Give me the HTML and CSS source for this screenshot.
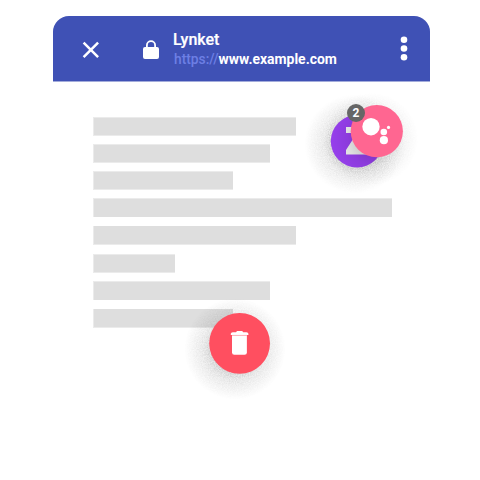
FILE: index.html
```html
<!DOCTYPE html>
<html lang="en">
<head>
<meta charset="utf-8">
<title>Lynket</title>
<link rel="stylesheet" href="styles.css">
</head>
<body>
<main class="browser">
  <header class="toolbar">
    <svg class="close" viewBox="0 0 18 18"><path d="M1.6 1.6 16.100 16.100M16.100 1.600 1.600 16.100"/></svg>
    <svg class="lock" viewBox="0 0 16 19"><path fill-rule="evenodd" d="M2 7H3V5.2a5 5 0 0 1 10 0V7h1a2 2 0 0 1 2 2v8a2 2 0 0 1-2 2H2a2 2 0 0 1-2-2V9a2 2 0 0 1 2-2ZM4.8 7h6.4V5.2a3.2 3.2 0 0 0-6.4 0Z"/></svg>
    <div class="heading">
      <div class="title">Lynket</div>
      <div class="url"><span class="scheme">https://</span>www.example.com</div>
    </div>
    <svg class="more" viewBox="0 0 8 25"><circle cx="4" cy="3.8" r="3.3"/><circle cx="4" cy="12.5" r="3.3"/><circle cx="4" cy="21.2" r="3.3"/></svg>
  </header>
  <section class="content">
    <div class="line top bottom w-long"></div>
    <div class="line top bottom w-medium"></div>
    <div class="line top bottom w-short"></div>
    <div class="line top w-full"></div>
    <div class="line bottom spaced w-long"></div>
    <div class="line top bottom spaced w-tiny"></div>
    <div class="line top w-medium"></div>
    <div class="line bottom spaced w-short"></div>
  </section>
</main>

<div class="bubbles">
  <svg viewBox="300 85 124 116">
    <defs>
      <radialGradient id="shade">
        <stop offset="0" stop-opacity=".42"/>
        <stop offset=".45" stop-opacity=".28"/>
        <stop offset=".62" stop-opacity=".15"/>
        <stop offset=".85" stop-opacity=".06"/>
        <stop offset="1" stop-opacity="0"/>
      </radialGradient>
      <filter id="grain" x="0" y="0" width="100%" height="100%" color-interpolation-filters="sRGB">
        <feTurbulence type="fractalNoise" baseFrequency=".85" numOctaves="2" result="noise"/>
        <feColorMatrix in="noise" values="0 0 0 0 0  0 0 0 0 0  0 0 0 0 0  1.9 0 0 0 -.45" result="speckle"/>
        <feComposite in="SourceGraphic" in2="speckle" operator="arithmetic" k1=".6" k2=".48"/>
      </filter>
      <clipPath id="purple"><circle cx="357" cy="141.200" r="26.200"/></clipPath>
    </defs>
    <ellipse cx="355" cy="144" rx="51" ry="50" fill="url(#shade)" filter="url(#grain)" opacity=".65"/>
    <ellipse cx="371" cy="139" rx="48" ry="47" fill="url(#shade)" filter="url(#grain)" opacity=".42"/>
    <circle cx="357" cy="141.200" r="26.200" fill="#963fec"/>
    <g clip-path="url(#purple)">
      <path d="M346 127h23v27.500h-23v-4.500l11-17h-11Z" fill="#eee"/>
      <circle cx="374" cy="139" r="43" fill="url(#shade)" opacity=".45"/>
    </g>
    <circle cx="376.800" cy="131.200" r="26.100" fill="#ff6691"/>
    <g fill="#fff"><circle cx="371" cy="126.700" r="8.700"/><circle cx="383.800" cy="132" r="3.300"/><circle cx="388.500" cy="127.400" r="1.600"/><circle cx="383.900" cy="140.200" r="4.100"/></g>
  </svg>
  <span class="badge">2</span>
</div>

<div class="remove">
  <svg viewBox="180 292 120 120">
    <circle cx="235" cy="349" r="51" fill="url(#shade)" filter="url(#grain)" opacity=".72"/>
    <circle cx="239.600" cy="343.300" r="30.400" fill="#ff4f60"/>
    <path d="M230.800 334.900v-1.200q0-1.500 2-1.500h3.200l1-1.200h5.200l1 1.200h3.200q2 0 2 1.500v1.200Z" fill="#fff"/>
    <path d="M232 334.900h15v1.100h-15Z" fill="#ffb6bf"/>
    <path d="M232 336h14.900v16.500q0 2.300-2.300 2.300h-10.300q-2.300 0-2.300-2.300Z" fill="#fff"/>
  </svg>
</div>
</body>
</html>
```
FILE: styles.css
```css
* { box-sizing: border-box; }
body {
  position: relative;
  width: 480px;
  height: 480px;
  margin: 0;
  overflow: hidden;
  background: #fff;
  font-family: Roboto, sans-serif;
}
svg { display: block; }
.browser { padding: 15.700px 49.700px 0 53.400px; }
.toolbar {
  display: flex;
  height: 65.300px;
  padding-left: 29px;
  padding-right: 22.700px;
  border-radius: 16px 16px 0 0;
  background: #3f51b5;
  box-shadow: 0 1px #a3acdb;
  color: #fff;
}
.close {
  width: 18px;
  height: 18px;
  margin-top: 25.300px;
  fill: none;
  stroke: #fff;
  stroke-width: 2.500;
}
.lock {
  width: 16px;
  height: 19px;
  margin: 24.500px 0 0 42.600px;
  fill: #fff;
}
.heading { margin: 14px 0 0 14px; white-space: nowrap; }
.title { font-size: 16px; line-height: 20px; font-weight: 500; -webkit-text-stroke: .2px #fff; }
.url { margin: 0 0 0 1px; font-size: 13.950px; line-height: 18px; font-weight: 700; }
.scheme { color: #6d7fe4; font-size: 13.800px; font-weight: 500; }
.more {
  width: 8px;
  height: 25px;
  margin: 20.700px 0 0 auto;
  fill: #fff;
}
.content {
  display: flex;
  flex-direction: column;
  gap: 8px;
  padding: 36px 0 0 39.600px;
}
.line {
  height: 19px;
  border: 0 solid #ebebeb;
  border-left-width: 1px;
  background: #dedede;
}
.top { border-top-width: 1px; }
.bottom { border-bottom-width: 1px; }
.spaced { margin-top: 1px; }
.w-full { width: 299px; }
.w-long { width: 203px; }
.w-medium { width: 177px; }
.w-short { width: 140px; }
.w-tiny { width: 82px; }
.bubbles {
  position: absolute;
  left: 300px;
  top: 85px;
  width: 124px;
  height: 116px;
}
.badge {
  position: absolute;
  left: 47px;
  top: 19.400px;
  width: 18px;
  height: 18px;
  border-radius: 50%;
  background: #666;
  color: #fff;
  font-size: 12px;
  line-height: 18px;
  font-weight: 700;
  text-align: center;
}
.remove {
  position: absolute;
  left: 180px;
  top: 292px;
  width: 120px;
  height: 120px;
}
```
